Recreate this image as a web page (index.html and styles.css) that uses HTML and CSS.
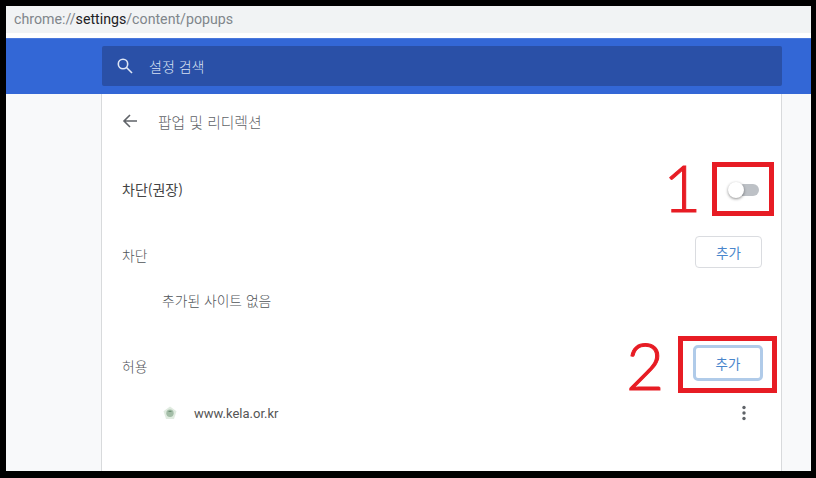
FILE: index.html
```html
<!DOCTYPE html>
<html lang="ko">
<head>
    <meta charset="UTF-8">
    <title>팝업 및 리디렉션</title>
    <link rel="stylesheet" href="styles.css">
</head>
<body>

<div class="frame">
    <div class="url-bar">chrome://<span class="url-host">settings</span>/content/popups</div>

    <div class="top-bar">
        <div class="search-box">
            <svg class="search-icon" width="16" height="16" viewBox="0 0 16 16" fill="none" stroke="#dfe6f5" stroke-width="1.6">
                <circle cx="6" cy="6" r="4.7"/>
                <path d="M9.5 9.5 L15 15"/>
            </svg>
            <span>설정 검색</span>
        </div>
    </div>

    <div class="page">
        <div class="card">
            <div class="card-header">
                <svg class="back-icon" width="16" height="16" viewBox="0 0 16 16" fill="none" stroke="#5f6368" stroke-width="1.6">
                    <path d="M15 8 H2 M8 2 L2 8 L8 14"/>
                </svg>
                <span class="card-title">팝업 및 리디렉션</span>
            </div>

            <div class="row row-toggle">
                <span class="toggle-label">차단(권장)</span>
                <div class="toggle"><div class="toggle-knob"></div></div>
            </div>

            <div class="row row-block">
                <span class="section-label">차단</span>
                <button class="add-button">추가</button>
            </div>
            <div class="empty-text">추가된 사이트 없음</div>

            <div class="row row-allow">
                <span class="section-label">허용</span>
                <button class="add-button add-button-focus">추가</button>
            </div>
            <div class="site-row">
                <svg class="site-icon" width="14" height="14" viewBox="0 0 14 14">
                    <path d="M7 0.5 L13.5 5.2 L11 13 H3 L0.5 5.2 Z" fill="#e0ebe0"/>
                    <circle cx="7" cy="7.2" r="3.7" fill="#a3bda7"/>
                    <path d="M4.8 6 L7 4.6 L9.2 6 Z" fill="#6f9077"/>
                </svg>
                <span class="site-name">www.kela.or.kr</span>
                <svg class="more-icon" width="4" height="16" viewBox="0 0 4 16" fill="#5f6368">
                    <circle cx="2" cy="2.5" r="1.7"/>
                    <circle cx="2" cy="8" r="1.7"/>
                    <circle cx="2" cy="13.5" r="1.7"/>
                </svg>
            </div>
        </div>
    </div>

    <!-- 빨간 표시 -->
    <div class="mark-box mark-box-1"></div>
    <div class="mark-num mark-num-1">1</div>
    <div class="mark-box mark-box-2"></div>
    <div class="mark-num mark-num-2">2</div>
</div>

</body>
</html>
```

FILE: styles.css
```css
html, body {
    margin: 0;
    padding: 0;
    height: 100%;
    background-color: #000;
    overflow: hidden;
}

body {
    font-family: 'Noto Sans CJK KR', 'Liberation Sans', sans-serif;
    font-weight: 300;
    color: #333;
}

.frame {
    position: absolute;
    top: 6px;
    left: 6px;
    width: 805px;
    height: 465px;
    display: flex;
    flex-direction: column;
    background-color: #fff;
    overflow: hidden;
}

.url-bar {
    height: 27px;
    line-height: 26px;
    padding-left: 8px;
    margin-bottom: 5px;
    flex-shrink: 0;
    background-color: #f1f3f4;
    font-family: 'Roboto', 'Liberation Sans', sans-serif;
    font-weight: 400;
    font-size: 14.2px;
    color: #80868b;
}

.url-host {
    color: #202124;
}

.top-bar {
    height: 56px;
    flex-shrink: 0;
    padding: 7px 29px 8px 96px;
    box-sizing: border-box;
    background-color: #3367d6;
    border-top: 1px solid #4a78dc;
}

.search-box {
    height: 40px;
    display: flex;
    align-items: center;
    gap: 16px;
    padding-left: 15px;
    background-color: #2a50a7;
    border-radius: 2px;
    color: #d7e0f3;
    font-size: 14px;
}

.search-icon {
    flex-shrink: 0;
}

.page {
    flex: 1;
    padding: 0 29px 0 95px;
    background-color: #f8f9fa;
}

.card {
    height: 100%;
    box-sizing: border-box;
    padding: 0 20px;
    background-color: #fff;
    border-left: 1px solid #d8dadc;
    border-right: 1px solid #d8dadc;
}

.card-header {
    height: 54px;
    padding-bottom: 2px;
    display: flex;
    align-items: center;
    gap: 20px;
}

.card-title {
    font-size: 14.8px;
    color: #5f6368;
}

.row {
    display: flex;
    align-items: center;
    justify-content: space-between;
}

.row-toggle {
    height: 32px;
    margin-top: 24px;
    padding-right: 2px;
}

.toggle-label {
    padding-bottom: 2px;
    font-size: 14px;
    font-weight: 400;
    color: #444;
}

.toggle {
    position: relative;
    width: 31px;
    height: 16px;
}

.toggle-knob {
    position: absolute;
    top: 0;
    left: 0;
    width: 16px;
    height: 16px;
    border-radius: 50%;
    background-color: #fff;
    box-shadow: 0 1px 3px rgba(0, 0, 0, 0.45);
}

.toggle::before {
    content: '';
    position: absolute;
    top: 2px;
    left: 5px;
    width: 26px;
    height: 12px;
    border-radius: 6px;
    background-color: #bdc1c6;
}

.row-block {
    height: 32px;
    margin-top: 30px;
}

.section-label {
    padding-top: 6px;
    font-size: 13.8px;
    color: #505458;
}

.add-button {
    width: 67px;
    height: 32px;
    margin-right: -1px;
    padding: 0;
    background-color: #fff;
    border: 1px solid #dadce0;
    border-radius: 4px;
    color: #4a86cc;
    font-family: inherit;
    font-weight: 400;
    font-size: 13.5px;
}

.add-button-focus {
    width: 70px;
    height: 36px;
    margin-right: -2px;
    border: 3px solid #b0cbe9;
    border-radius: 5px;
}

.empty-text {
    height: 28px;
    line-height: 28px;
    margin-top: 18px;
    padding-left: 40px;
    font-size: 13.8px;
    color: #505458;
}

.row-allow {
    height: 36px;
    margin-top: 31px;
}

.site-row {
    display: flex;
    align-items: center;
    height: 32px;
    margin-top: 16px;
    padding-left: 41px;
}

.site-icon {
    flex-shrink: 0;
}

.site-name {
    margin-left: 17px;
    font-family: 'Roboto', 'Liberation Sans', sans-serif;
    font-weight: 400;
    font-size: 13px;
    color: #555;
}

.more-icon {
    margin-left: auto;
    margin-right: 15px;
}

.mark-box {
    position: absolute;
    box-sizing: border-box;
    border: 5px solid #e71c24;
}

.mark-box-1 {
    left: 706px;
    top: 156px;
    width: 62px;
    height: 54px;
}

.mark-box-2 {
    left: 672px;
    top: 330px;
    width: 99px;
    height: 57px;
}

.mark-num {
    position: absolute;
    font-family: 'Lato', 'Liberation Sans', sans-serif;
    font-weight: 300;
    font-size: 66px;
    line-height: 66px;
    color: #e71c24;
    -webkit-text-stroke: 1px #e71c24;
}

.mark-num-1 {
    left: 657px;
    top: 148px;
}

.mark-num-2 {
    left: 620px;
    top: 326px;
}
```
